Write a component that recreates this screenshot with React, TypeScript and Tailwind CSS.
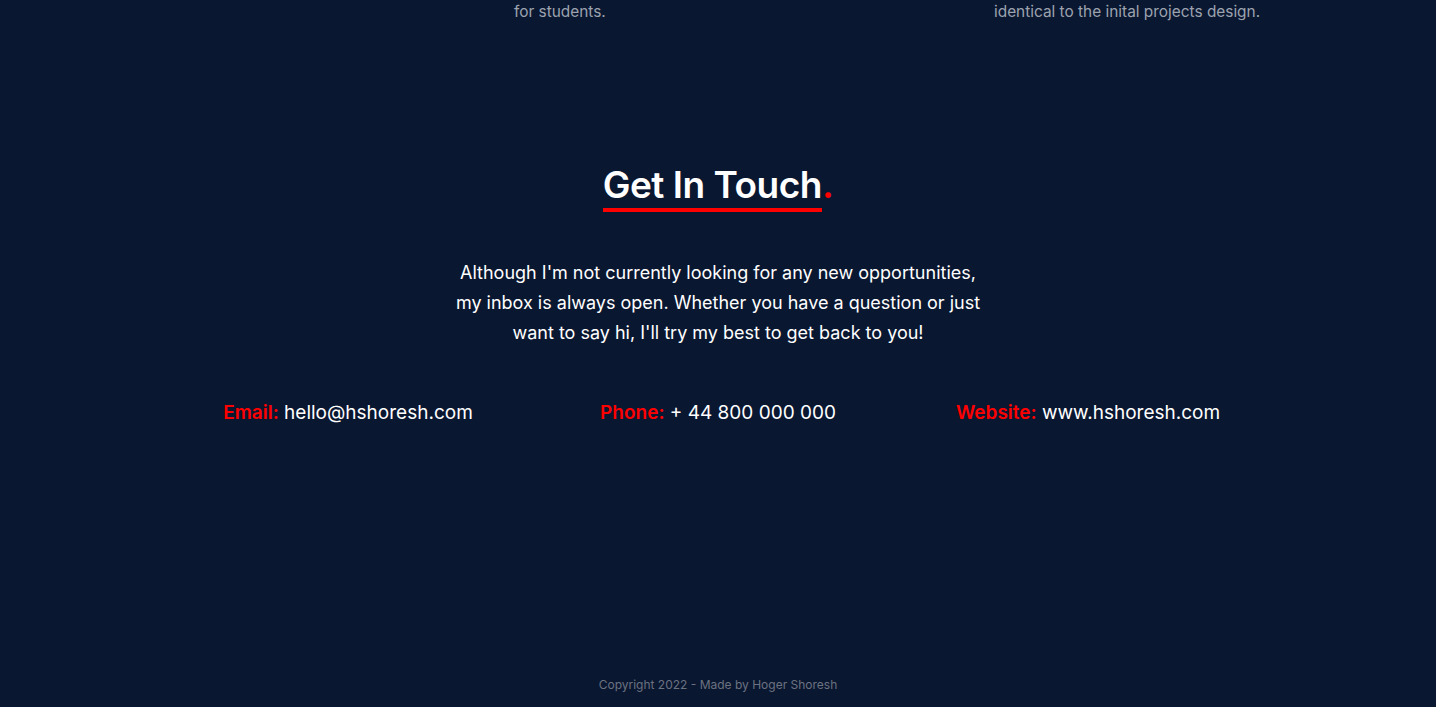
export default function App() {
  const contacts = [
    { label: 'Email:', value: 'hello@hshoresh.com' },
    { label: 'Phone:', value: '+ 44 800 000 000' },
    { label: 'Website:', value: 'www.hshoresh.com' },
  ];

  return (
    <div className="min-h-[707px] bg-[#0a1731] font-['Inter',sans-serif] flex flex-col">
      {/* tail end of the projects section */}
      <div className="grid grid-cols-[514px_480px_1fr] pt-[1px] text-[15.4px] leading-[22px] text-[#9ca3af]">
        <div />
        <p>for students.</p>
        <p>identical to the inital projects design.</p>
      </div>

      {/* contact */}
      <section className="flex flex-col items-center pt-[138px]">
        <h2 className="text-[37px] leading-[48px] font-semibold text-white tracking-[-0.5px]">
          <span className="relative inline-block">
            Get In Touch
            <span className="absolute left-0 right-0 -bottom-[3px] h-[4px] bg-[#ff0000]" />
          </span>
          <span className="text-[#ff0000]">.</span>
        </h2>

        <p className="mt-[49px] w-[540px] text-center text-[18px] leading-[30px] text-white">
          Although I'm not currently looking for any new opportunities, my inbox is always open. Whether you have a question or just want to say hi, I'll try my best to get back to you!
        </p>

        <div className="mt-[51px] grid grid-cols-3 w-[1110px] text-[19px] leading-[28px]">
          {contacts.map((c) => (
            <div key={c.label} className="text-center text-white">
              <span className="text-[#ff0000] font-semibold">{c.label}</span> {c.value}
            </div>
          ))}
        </div>
      </section>

      <footer className="mt-auto pb-[13px] text-center text-[12px] leading-[18px] text-[#6b7280]">
        Copyright 2022 - Made by Hoger Shoresh
      </footer>
    </div>
  );
}
